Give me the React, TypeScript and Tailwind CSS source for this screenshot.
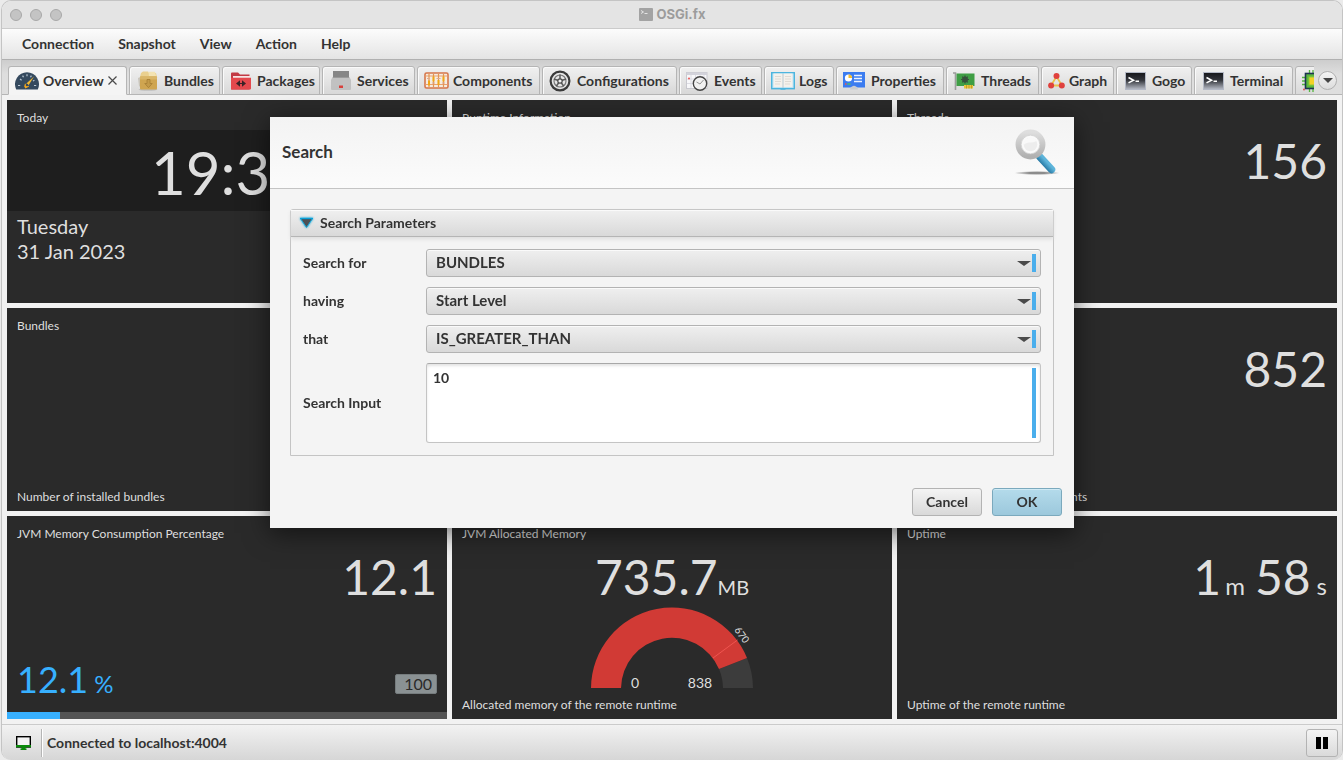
import React, { useState } from 'react';

/* ---------- Tab icons ---------- */

const GaugeIcon = () => (
  <svg width="24" height="18" viewBox="0 0 24 18">
    <path d="M1.2 17.500A12 12 0 1 1 22.800 17.500Z" fill="#34495e" />
    <path d="M3 13.5h2.2M19 13.5h2.2M5 7l1.6 1.2M12 2.2v2M7.6 3.6l.9 1.7M16.4 3.6l-.9 1.7M19.4 8.2l-1.4.8" stroke="#b9c6d2" strokeWidth="1.2" />
    <path d="M19 4.5 13.6 13.2 11.4 11.6Z" fill="#f5b92e" />
    <path d="M10 11.6 14.2 14.4 10.4 16.6 9.2 14.6Z" fill="#f5a81c" />
    <circle cx="12" cy="13" r="1.3" fill="#34495e" />
  </svg>
);

const BoxIcon = () => (
  <svg width="20" height="20" viewBox="0 0 20 20">
    <ellipse cx="10" cy="18.6" rx="9.5" ry="1.2" fill="#bdbdbd" />
    <path d="M0 7 4 5.5V18L1 15Z" fill="#c9c5bb" />
    <path d="M3 2 5 0.5h5L11 2h7l1 4H2Z" fill="#ead08f" />
    <path d="M10.5 0.8H17L18 5h-7Z" fill="#f3e3b3" />
    <rect x="2" y="5.5" width="17" height="13" rx="1" fill="#cfa550" />
    <rect x="2" y="5.5" width="17" height="3" fill="#dab668" />
    <path d="M9 8.5h3v4h2.2l-3.7 4.2-3.7-4.2H9Z" fill="#c39a48" stroke="#a67e33" strokeWidth=".8" />
  </svg>
);

const PackageIcon = () => (
  <svg width="20" height="18" viewBox="0 0 20 18">
    <path d="M0 1.5Q0 .5 1 .5h6L9 2.5h9.500V17.500H0Z" fill="#c23a44" />
    <path d="M2 4h17v4H2Z" fill="#f6e4e4" />
    <path d="M0 5.800h20V16.500q0 1-1 1H1q-1 0-1-1Z" fill="#e4484d" />
    <path d="M9 8.300v6.400L5 11.500ZM11 8.300v6.400l4-3.200Z" fill="#3a2226" />
    <path d="M7 11.500h6" stroke="#3a2226" strokeWidth="1" />
  </svg>
);

const ServiceIcon = () => (
  <svg width="20" height="19" viewBox="0 0 20 19">
    <rect x="2" y="0" width="16" height="9" fill="#868686" />
    <path d="M1.500 6h17L20 9V18q0 1-1 1H1q-1 0-1-1V9Z" fill="#c1c1c1" />
    <path d="M2 6h16v1H2Z" fill="#9a9a9a" />
    <rect x="8" y="14.500" width="4" height="2.500" fill="#d9413c" />
  </svg>
);

const ComponentIcon = () => (
  <svg width="25" height="17" viewBox="0 0 25 17">
    <rect x="1" y="1" width="23" height="15" rx="1.500" fill="#f6ece0" stroke="#d6764a" strokeWidth="1.600" />
    <path d="M1.500 4h22M1.500 12.500h22" stroke="#e9a06e" strokeWidth="1" />
    <path d="M5 2v13M9.500 2v13M14.500 2v13M19.500 2v13" stroke="#e39552" strokeWidth="1.200" />
    <path d="M5 8.500v5M9.500 4.500v5M14.500 8v5M19.500 4.500v5" stroke="#f0a616" strokeWidth="2" />
    <path d="M3 6.500h3M8 11h3M12.500 6.500h4M18 11h3" stroke="#dfa98e" strokeWidth="1" />
  </svg>
);

const WheelIcon = () => (
  <svg width="22" height="22" viewBox="0 0 22 22">
    <circle cx="11" cy="11" r="9.400" fill="#e4e4e4" stroke="#3b3b3b" strokeWidth="2.200" />
    <circle cx="11" cy="11" r="6" fill="none" stroke="#7a7a7a" strokeWidth="1.200" />
    <path d="M11 11V4.500M11 11 4.800 9M11 11l6.200-2M11 11l-3.800 5.300M11 11l3.800 5.300" stroke="#5a5a5a" strokeWidth="1.500" />
    <circle cx="11" cy="11" r="2.200" fill="#f0f0f0" stroke="#4b4b4b" strokeWidth="1.200" />
  </svg>
);

const EventIcon = () => (
  <svg width="22" height="20" viewBox="0 0 22 20">
    <rect x=".5" y="1.500" width="20.500" height="16" fill="#f8f8fa" stroke="#c9c9cf" />
    <path d="M.5 1.500h20.500v2.500H.5Z" fill="#d3d3db" />
    <path d="M5 4v13M9.500 4v13M14 4v4M18 4v4M1 8h9M1 12.500h7" stroke="#d6d6de" strokeWidth=".8" />
    <circle cx="3" cy="7.500" r="1" fill="#ec5555" />
    <circle cx="14" cy="12.500" r="6.700" fill="#f1f1f1" stroke="#454545" strokeWidth="1.400" />
    <path d="M14 13 17.500 9M14 13 10.500 11" stroke="#8a8a8a" strokeWidth=".9" />
  </svg>
);

const LogIcon = () => (
  <svg width="24" height="18" viewBox="0 0 24 18">
    <rect x=".700" y=".700" width="22.600" height="16" fill="#bfe4f4" stroke="#4db5de" strokeWidth="1.400" />
    <path d="M2.500 1.500h8.500q1 0 1 1 0-1 1-1h8.500V15H2.500Z" fill="#f4f1ec" />
    <path d="M12 2v14" stroke="#b8c9d1" strokeWidth="1" />
    <path d="M4 4.500h6M4 7h6M4 9.500h6M4 12h5M14 4.500h6M14 7h6M14 9.500h6M14 12h5" stroke="#dedad4" strokeWidth="1" />
    <path d="M9.500 16.500h5v1.200h-5Z" fill="#4db5de" />
  </svg>
);

const PropertyIcon = () => (
  <svg width="22" height="18" viewBox="0 0 22 18">
    <rect width="22" height="15.500" fill="#3b7cf0" />
    <circle cx="5.500" cy="6" r="3.600" fill="#fff" />
    <path d="M5.500 6V2.400A3.600 3.600 0 0 1 9.100 6Z" fill="#f6bd2b" />
    <path d="M11 3.500h8M11 6.500h8M11 9.500h8" stroke="#eaf1ff" strokeWidth="1.300" />
    <path d="M2 12h1.500" stroke="#ef5350" strokeWidth="1.600" />
    <path d="M4.500 12h3" stroke="#53c15b" strokeWidth="1.600" />
    <path d="M7 17.500q0-2.500 2-3 2-1.500 4 0 2 .5 2 3Z" fill="#c8ccd2" />
  </svg>
);

const CardIcon = () => (
  <svg width="22" height="18" viewBox="0 0 22 18">
    <path d="M0 1h2.500V18" fill="none" stroke="#9c9c9c" strokeWidth="1.600" />
    <rect x="3.500" y="1.500" width="18" height="12.500" fill="#3f9e45" />
    <circle cx="12" cy="7.500" r="3" fill="#37513c" />
    <path d="M12 3.500v8M8 7.500h8M9.200 4.700l5.600 5.600M14.800 4.700l-5.600 5.600" stroke="#37513c" strokeWidth="1.200" />
    <rect x="11" y="13" width="9" height="3.500" fill="#e9c63e" />
    <path d="M13.500 13v3.500M16 13v3.500M18.500 13v3.500" stroke="#b58f1c" strokeWidth=".700" />
  </svg>
);

const GraphIcon = () => (
  <svg width="17" height="16" viewBox="0 0 17 16">
    <path d="M8.500 3.500 3 12.500h11Z" fill="none" stroke="#ecc24a" strokeWidth="1.800" />
    <circle cx="8.500" cy="3.100" r="3" fill="#e0413d" />
    <circle cx="3.100" cy="12.500" r="3" fill="#e0413d" />
    <circle cx="13.800" cy="12.500" r="3" fill="#e0413d" />
  </svg>
);

const ConsoleIcon = () => (
  <svg width="21" height="18" viewBox="0 0 21 18">
    <defs>
      <linearGradient id="console" x1="0" y1="0" x2="0" y2="1">
        <stop offset="0" stopColor="#15161a" />
        <stop offset=".45" stopColor="#33353b" />
        <stop offset="1" stopColor="#b9bdc8" />
      </linearGradient>
    </defs>
    <rect x=".5" y=".5" width="20" height="17" fill="url(#console)" stroke="#b4b9c6" />
    <path d="m3.500 5.500 5 2.700-5 2.700" fill="none" stroke="#fff" strokeWidth="1.600" />
    <path d="M10.500 9.300h3.500" stroke="#fff" strokeWidth="1.600" />
  </svg>
);

const ChipIcon = () => (
  <svg width="22" height="22" viewBox="0 0 22 22">
    <path d="M7.500 0v22M11 0v22M14.500 0v22M0 7.500h22M0 11h22M0 14.500h22" stroke="#55b53f" strokeWidth="1.300" />
    <rect x="3.500" y="3.500" width="15" height="15" fill="#5cb83c" stroke="#1d3550" strokeWidth="1.600" />
    <rect x="7" y="7" width="8" height="8" fill="#f3d126" stroke="#8fc93a" />
    <circle cx="2" cy="19.500" r="1" fill="#e05252" />
  </svg>
);

const SearchIcon = () => (
  <svg width="48" height="48" viewBox="0 0 48 48">
    <defs>
      <linearGradient id="ring" x1="0" y1="0" x2="0" y2="1">
        <stop offset="0" stopColor="#dedede" />
        <stop offset="1" stopColor="#b0b0b0" />
      </linearGradient>
      <linearGradient id="handle" x1="0" y1="1" x2="1" y2="0">
        <stop offset=".3" stopColor="#2b7da8" />
        <stop offset=".6" stopColor="#5db4da" />
      </linearGradient>
      <radialGradient id="shade">
        <stop offset=".4" stopColor="#8c8c8c" />
        <stop offset="1" stopColor="#8c8c8c" stopOpacity="0" />
      </radialGradient>
    </defs>
    <ellipse cx="23" cy="44" rx="23" ry="2" fill="url(#shade)" />
    <path d="M26 28 37.500 40.500" stroke="url(#handle)" strokeWidth="7.500" strokeLinecap="round" />
    <circle cx="16.500" cy="15.500" r="12.200" fill="#fafafa" stroke="url(#ring)" strokeWidth="5.500" />
    <circle cx="16.500" cy="15.500" r="9.300" fill="none" stroke="#cfcfcf" strokeWidth=".8" />
    <circle cx="16.500" cy="15.500" r="6.800" fill="#ededed" />
    <path d="M9.500 16a7 7 0 0 1 13-4q-4 2-7 1.500T9.500 16Z" fill="#f9f9f9" />
  </svg>
);

/* ---------- Tabs ---------- */

const tabs = [
  { name: 'Overview',       icon: GaugeIcon,     className: 'w-[119px] pl-1.5 gap-1' },
  { name: 'Bundles',        icon: BoxIcon,       className: 'w-[91px] pl-2 gap-1.5'  },
  { name: 'Packages',       icon: PackageIcon,   className: 'w-[98px] pl-2 gap-1.5'  },
  { name: 'Services',       icon: ServiceIcon,   className: 'w-[93px] pl-2 gap-1.5'  },
  { name: 'Components',     icon: ComponentIcon, className: 'w-[123px] pl-1.5 gap-1' },
  { name: 'Configurations', icon: WheelIcon,     className: 'w-[135px] pl-1.5 gap-1.5' },
  { name: 'Events',         icon: EventIcon,     className: 'w-[83px] pl-1.5 gap-1.5' },
  { name: 'Logs',           icon: LogIcon,       className: 'w-[70px] pl-1.5 gap-1'  },
  { name: 'Properties',     icon: PropertyIcon,  className: 'w-[108px] pl-1.5 gap-1.5' },
  { name: 'Threads',        icon: CardIcon,      className: 'w-[93px] pl-1.5 gap-1.5' },
  { name: 'Graph',          icon: GraphIcon,     className: 'w-[73px] pl-1.5 gap-1'  },
  { name: 'Gogo',           icon: ConsoleIcon,   className: 'w-[76px] pl-2 gap-1.5'  },
  { name: 'Terminal',       icon: ConsoleIcon,   className: 'w-[99px] pl-2 gap-1.5'  },
];

const menus = ['Connection', 'Snapshot', 'View', 'Action', 'Help'];

const TabBar = () => {
  const [active, setActive] = useState('Overview');

  return (
    <div className="flex h-[35px] items-end bg-linear-to-b from-[#cdcdcd] to-[#dedede] to-40% shadow-[inset_0_-1px_0_#b5b5b5]">
      <div role="tablist" className="flex min-w-0 flex-1 gap-0.5 overflow-hidden pl-1.5">
        {tabs.map(({ name, icon: Icon, className }) => (
          <button
            key={name}
            role="tab"
            aria-selected={active === name}
            onClick={() => setActive(name)}
            className={`flex h-[29px] shrink-0 items-center rounded-t-[3px] border border-[#b5b5b5] whitespace-nowrap ${className} ${
              active === name
                ? 'border-b-[#f4f4f4] bg-[#f4f4f4]'
                : 'bg-linear-to-b from-[#f0f0f0] to-[#d9d9d9] shadow-[inset_1px_1px_0_#fafafa]'
            }`}
          >
            <span className="flex shrink-0"><Icon /></span>
            {name}
            {active === name && (
              <svg width="9" height="9" viewBox="0 0 9 9">
                <path d="m.500.500 8 8M8.500.500l-8 8" stroke="#4a4a4a" strokeWidth="1.200" />
              </svg>
            )}
          </button>
        ))}
        <button role="tab" aria-label="Memory" className="flex h-[29px] w-10 shrink-0 items-center rounded-t-[3px] border border-[#b5b5b5] bg-linear-to-b from-[#f0f0f0] to-[#d9d9d9] pl-1.5">
          <ChipIcon />
        </button>
      </div>
      <div className="flex h-[34px] w-7 shrink-0 items-center pt-1 pl-1">
        <button aria-label="More tabs" className="flex size-[19px] items-center justify-center rounded-full border border-[#b0b0b0] bg-linear-to-b from-[#f4f4f4] to-[#dcdcdc]">
          <svg width="10" height="5" viewBox="0 0 10 5"><path d="M0 0h10L5 5Z" fill="#444" /></svg>
        </button>
      </div>
    </div>
  );
};

/* ---------- Dashboard ---------- */

type TileProps = {
  title: string;
  text?: string;
  children?: React.ReactNode;
};

const Tile = ({ title, text, children }: TileProps) => (
  <section className="flex min-h-0 flex-col overflow-hidden bg-[#2a2a2a] pt-2.5 text-[#dfdfdf]">
    <h2 className="px-2.5 text-xs">{title}</h2>
    <div className="flex min-h-0 flex-1 flex-col">{children}</div>
    {text && <p className="px-2.5 pb-1.5 text-xs">{text}</p>}
  </section>
);

const BigNumber = ({ children }: { children: React.ReactNode }) => (
  <div className="mt-[7px] px-2.5 text-right text-5xl leading-14">{children}</div>
);

const Gauge = () => (
  <svg className="mx-auto shrink-0" width="180" height="90" viewBox="-90 -83 180 90" fontSize="14" fill="#dfdfdf">
    <path d="M81 0A81 81 0 0 0 75 -30L47 -19A51 51 0 0 1 51 0Z" fill="#3c3c3c" />
    <path d="M-81 0A81 81 0 0 1 75 -30L47 -19A51 51 0 0 0 -51 0Z" fill="#d13a35" />
    <path d="M41 -30 65.500 -48" stroke="#f0544f" />
    <text x="-37" y="0" textAnchor="middle">0</text>
    <text x="28" y="0" textAnchor="middle">838</text>
    <text transform="translate(67 -51) rotate(54)" textAnchor="middle" fontSize="10">670</text>
  </svg>
);

const Dashboard = () => (
  <main className="grid min-h-0 flex-1 grid-cols-3 grid-rows-3 gap-[5px] bg-[#f2f2f2] p-[5px]">
    <Tile title="Today">
      <time className="mt-1 bg-[#1e1e1e] pt-1 pl-36 text-6xl leading-[77px]">19:3</time>
      <p className="px-2.5 pt-[3px] text-xl leading-[25px]">
        Tuesday<br />31 Jan 2023
      </p>
    </Tile>
    <Tile title="Runtime Information" />
    <Tile title="Threads">
      <BigNumber>156</BigNumber>
    </Tile>

    <Tile title="Bundles" text="Number of installed bundles" />
    <Tile title="Services" />
    <Tile title="Components" text="Number of registered components">
      <BigNumber>852</BigNumber>
    </Tile>

    <Tile title="JVM Memory Consumption Percentage">
      <BigNumber>12.1</BigNumber>
      <div className="mt-auto flex items-end justify-between px-2.5 pb-3">
        <div className="flex items-baseline gap-1.5 text-4xl text-[#37b0ff]">
          12.1<span className="text-2xl leading-8">%</span>
        </div>
        <span className="mb-1.5 rounded-xs border border-[#767c7e] bg-[#8a9193] pr-1 pl-2 text-base leading-[18px] text-[#2a2a2a]">100</span>
      </div>
      <div className="h-[7px] shrink-0 bg-[#545454]">
        <div className="h-full w-[12.1%] bg-[#37b0ff]" />
      </div>
    </Tile>
    <Tile title="JVM Allocated Memory" text="Allocated memory of the remote runtime">
      <div className="mt-[7px] text-center text-5xl leading-14">
        735.7<span className="text-xl">MB</span>
      </div>
      <Gauge />
    </Tile>
    <Tile title="Uptime" text="Uptime of the remote runtime">
      <BigNumber>
        1<span className="pl-1 text-2xl">m</span>
        <span className="pl-2.5">58</span>
        <span className="pl-1.5 text-2xl">s</span>
      </BigNumber>
    </Tile>
  </main>
);

/* ---------- Search dialog ---------- */

const fields = [
  { id: 'target',   label: 'Search for', options: ['BUNDLES', 'PACKAGES', 'SERVICES'] },
  { id: 'property', label: 'having',     options: ['Start Level', 'ID', 'State']      },
  { id: 'operator', label: 'that',       options: ['IS_GREATER_THAN', 'EQUALS']       },
];

const SearchDialog = () => {
  const [input, setInput] = useState('10');

  return (
    <div className="fixed inset-0 flex items-start justify-center pt-[117px] pl-px">
      <div role="dialog" aria-labelledby="dialog-title" className="w-[804px] bg-[#f4f4f4] shadow-[0_5px_24px_rgba(0,0,0,0.55)]">
        <header className="flex h-18 items-center justify-between border-b border-[#c4c4c4] bg-linear-to-b from-[#f3f3f3] to-[#fbfbfb] px-3">
          <h1 id="dialog-title" className="text-[17px]">Search</h1>
          <SearchIcon />
        </header>

        <div className="px-5 pt-5">
          <div className="rounded-t-[3px] border border-[#c4c4c4]">
            <button className="flex h-[27px] w-full items-center gap-1.5 border-b border-[#b5b5b5] bg-linear-to-b from-[#f0f0f0] to-[#d9d9d9] pl-2 shadow-[inset_0_1px_0_#fafafa,0_2px_4px_#dcdcdc]">
              <svg width="15" height="12" viewBox="0 0 15 12" className="drop-shadow-[0_0_1px_#00a5dc]">
                <path d="M1.500 1.500h12L7.500 10.500Z" fill="#4d5054" stroke="#18a5d6" strokeWidth="1" />
                <path d="M1 1.500h13" stroke="#0aa0d8" strokeWidth="1.400" />
              </svg>
              Search Parameters
            </button>

            <div className="grid grid-cols-[113px_1fr] items-center gap-2.5 p-3">
              {fields.map((field) => (
                <React.Fragment key={field.id}>
                  <label htmlFor={field.id}>{field.label}</label>
                  <div className="relative">
                    <select
                      id={field.id}
                      className="block h-7 w-full appearance-none rounded-[3px] border border-[#b3b3b3] bg-linear-to-b from-[#efefef] to-[#d9d9d9] pl-[9px] text-[15px] shadow-[inset_0_1px_0_#fafafa]"
                    >
                      {field.options.map((o) => <option key={o}>{o}</option>)}
                    </select>
                    <svg className="pointer-events-none absolute top-3 right-2.5" width="14" height="5" viewBox="0 0 14 5">
                      <path d="M0 0h14L7 5Z" fill="#4a4a4a" />
                    </svg>
                    <span className="pointer-events-none absolute inset-y-[5px] right-[5px] w-1 bg-[#4aaeec]" />
                  </div>
                </React.Fragment>
              ))}

              <label htmlFor="search-input">Search Input</label>
              <div className="relative">
                <textarea
                  id="search-input"
                  value={input}
                  onChange={(e) => setInput(e.target.value)}
                  className="block h-20 w-full resize-none rounded-[3px] border border-[#c4c4c4] border-t-[#a8a8a8] bg-white px-1.5 py-1 shadow-[inset_0_2px_3px_#e4e4e4] outline-none"
                />
                <span className="pointer-events-none absolute inset-y-[5px] right-[5px] w-1 bg-[#4aaeec]" />
              </div>
            </div>
          </div>
        </div>

        <footer className="flex justify-end gap-2.5 px-3 pt-8 pb-3">
          <button className="h-7 w-[70px] rounded-[3px] border border-[#b3b3b3] bg-linear-to-b from-[#f4f4f4] to-[#d9d9d9]">Cancel</button>
          <button className="h-7 w-[70px] rounded-[3px] border border-[#7ba9bd] bg-linear-to-b from-[#b4dbeb] to-[#9cc8dc] shadow-[inset_0_1px_0_#cfeaf5]">OK</button>
        </footer>
      </div>
    </div>
  );
};

/* ---------- Window ---------- */

const App: React.FC = () => (
  <div className="h-screen bg-[#ebebeb] pl-px font-['Lato',sans-serif] text-sm font-bold text-[#333]">
    <div className="flex h-full flex-col overflow-hidden rounded-[10px] border border-b-0 border-[#c4c4c4] bg-[#f4f4f4]">
      <div className="flex h-7 items-center border-b border-[#cbcbcb] bg-[#e4e4e4] px-2">
        <div className="flex flex-1 gap-2">
          {['Close', 'Minimize', 'Zoom'].map((label) => (
            <button key={label} aria-label={label} className="size-3 rounded-full border border-[#a8a8a8] bg-[#c4c4c4]" />
          ))}
        </div>
        <div className="flex items-center gap-1 font-['Inter',sans-serif] text-[13px] text-[#9c9c9c]">
          <svg width="14" height="13" viewBox="0 0 14 13">
            <rect width="14" height="13" rx="1" fill="#a3a3a3" />
            <path d="m2 2.500 2.500 1.500L2 5.500M5.500 5.500h3" fill="none" stroke="#e4e4e4" />
          </svg>
          OSGi.fx
        </div>
        <div className="flex-1" />
      </div>

      <nav className="flex h-[31px] items-center border-b border-[#b0b0b0] bg-linear-to-b from-[#fcfcfc] to-[#e4e4e4] pl-2">
        {menus.map((menu) => (
          <button key={menu} className="px-3">{menu}</button>
        ))}
      </nav>

      <TabBar />
      <div className="flex min-h-0 flex-1 flex-col font-normal">
        <Dashboard />
      </div>

      <footer className="flex h-9 shrink-0 items-center border-t border-[#cbcbcb] bg-linear-to-b from-[#f2f2f2] to-[#d6d6d6] pr-1 pl-3.5">
        <svg width="15" height="14" viewBox="0 0 15 14">
          <rect x=".700" y=".700" width="13.600" height="10.300" fill="#f4f4f4" stroke="#000" strokeWidth="1.400" />
          <path d="M0 9h15v2.300H0ZM5.500 11h4v1.500h1V14h-6v-1.500h1Z" fill="#0a8a0a" />
        </svg>
        <div className="ml-2.5 h-7 w-0.5 border-l border-[#b5b5b5] bg-white" />
        <span className="ml-1">Connected to localhost:4004</span>
        <button aria-label="Pause" className="ml-auto flex h-7 w-8 items-center justify-center rounded-[3px] border border-[#b3b3b3] bg-linear-to-b from-[#f4f4f4] to-[#dadada]">
          <svg width="12" height="12" viewBox="0 0 12 12"><path d="M0 0h5v12H0ZM7 0h5v12H7Z" /></svg>
        </button>
      </footer>
    </div>

    <SearchDialog />
  </div>
);

export default App;
